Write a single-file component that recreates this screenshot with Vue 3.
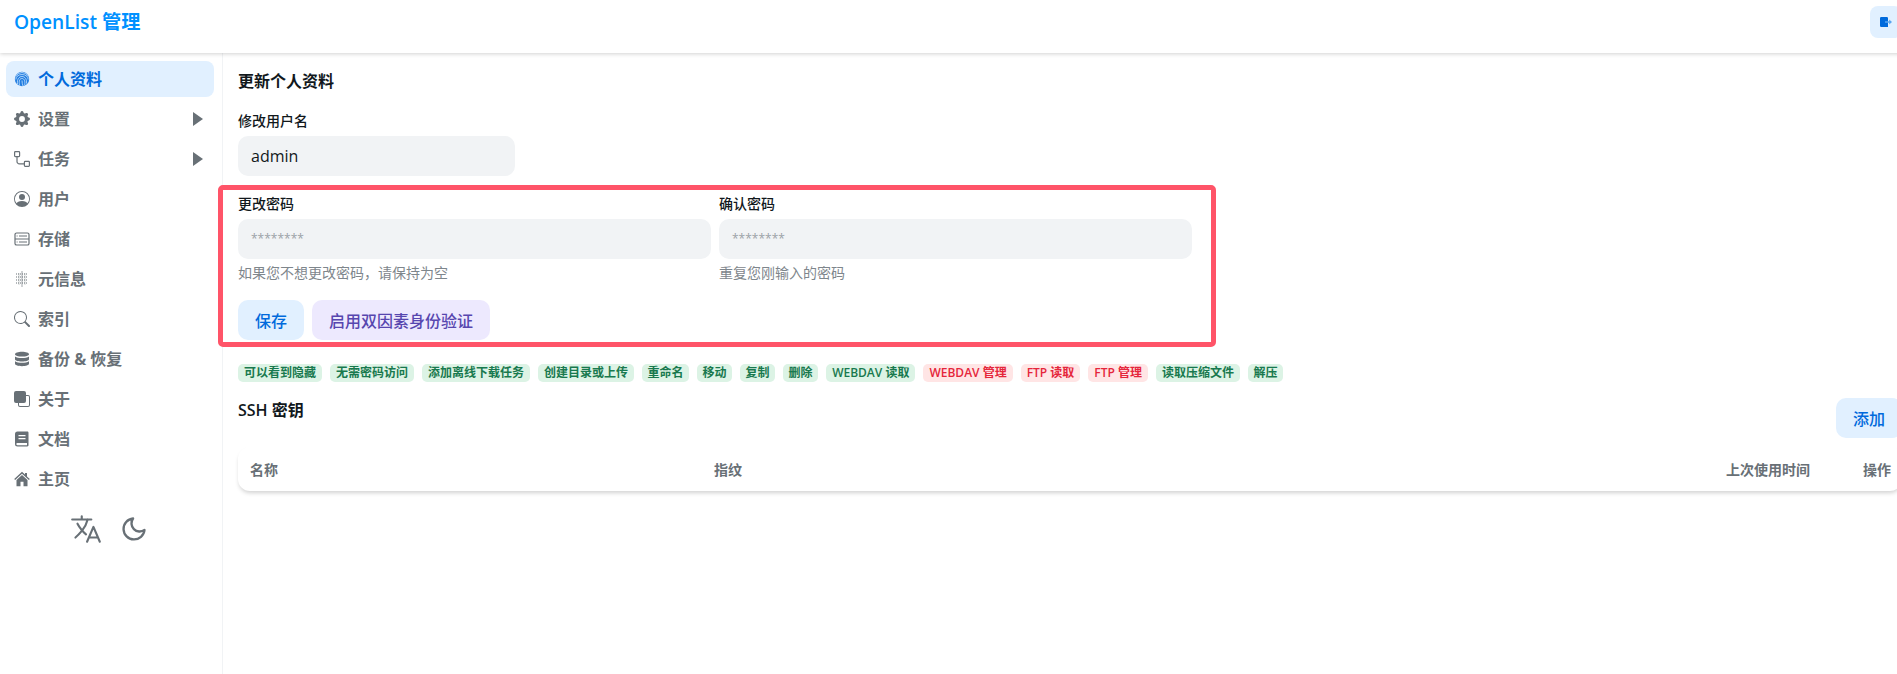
<script setup>
const navItems = [
  { label: '个人资料', icon: 'finger', active: true },
  { label: '设置', icon: 'gear', arrow: true },
  { label: '任务', icon: 'route', arrow: true },
  { label: '用户', icon: 'user' },
  { label: '存储', icon: 'storage' },
  { label: '元信息', icon: 'meta' },
  { label: '索引', icon: 'search' },
  { label: '备份 & 恢复', icon: 'db' },
  { label: '关于', icon: 'front' },
  { label: '文档', icon: 'book' },
  { label: '主页', icon: 'home' },
]
const perms = [
  { text: '可以看到隐藏' }, { text: '无需密码访问' }, { text: '添加离线下载任务' }, { text: '创建目录或上传' },
  { text: '重命名', tight: true }, { text: '移动', tight: true }, { text: '复制', tight: true }, { text: '删除', tight: true },
  { text: 'WEBDAV 读取' },
  { text: 'WEBDAV 管理', danger: true }, { text: 'FTP 读取', danger: true }, { text: 'FTP 管理', danger: true },
  { text: '读取压缩文件' }, { text: '解压', tight: true },
]
</script>

<template>
  <div class="page">
    <header class="topbar">
      <div class="brand">OpenList 管理</div>
      <button class="logout" aria-label="退出">
        <svg viewBox="0 0 12 10" width="12" height="10">
          <path fill="#006adc" d="M1.2 0h5.6A1.2 1.2 0 0 1 8 1.2V10H1.2A1.2 1.2 0 0 1 0 8.8V1.2A1.2 1.2 0 0 1 1.2 0z" />
          <path fill="#5aa5ef" d="M5 4.200h4.200V2.600L12 5 9.200 7.400V5.800H5z" />
        </svg>
      </button>
    </header>

    <div class="body">
      <aside class="sidebar">
        <nav class="nav">
          <a v-for="item in navItems" :key="item.label" class="nav-item" :class="{ active: item.active }">
            <span class="nav-icon">
              <svg v-if="item.icon === 'finger'" viewBox="0 0 16 16" class="ic" fill="none">
                <circle cx="8" cy="8" r="7.200" fill="currentColor" opacity=".85" />
                <g fill="none" stroke="#e1f0ff" stroke-width=".7">
                  <path d="M2.200 5.200A6.400 6.400 0 0 1 13.800 5.200" />
                  <path d="M1.800 8.500A6.200 5 0 0 1 14.200 8.500" />
                  <path d="M3.500 13c-.6-5 1.600-7.500 4.500-7.500s5 2.500 4.500 7" />
                  <path d="M5.500 14.500c-.8-5 .2-7 2.500-7s3.300 2.500 2.700 6.500" />
                  <path d="M8 9.500c0 2 .4 3.800 1 5.500" />
                </g>
              </svg>
              <svg v-else-if="item.icon === 'gear'" viewBox="0 0 16 16" class="ic" fill="currentColor">
                <path d="M9.405 1.05c-.413-1.4-2.397-1.4-2.81 0l-.1.34a1.464 1.464 0 0 1-2.105.872l-.31-.17c-1.283-.698-2.686.705-1.987 1.987l.169.311c.446.82.023 1.841-.872 2.105l-.34.1c-1.4.413-1.4 2.397 0 2.81l.34.1a1.464 1.464 0 0 1 .872 2.105l-.17.31c-.698 1.283.705 2.686 1.987 1.987l.311-.169a1.464 1.464 0 0 1 2.105.872l.1.34c.413 1.4 2.397 1.4 2.81 0l.1-.34a1.464 1.464 0 0 1 2.105-.872l.31.17c1.283.698 2.686-.705 1.987-1.987l-.169-.311a1.464 1.464 0 0 1 .872-2.105l.34-.1c1.4-.413 1.4-2.397 0-2.81l-.34-.1a1.464 1.464 0 0 1-.872-2.105l.17-.31c.698-1.283-.705-2.686-1.987-1.987l-.311.169a1.464 1.464 0 0 1-2.105-.872l-.1-.34zM8 10.93a2.929 2.929 0 1 1 0-5.86 2.929 2.929 0 0 1 0 5.858z" />
              </svg>
              <svg v-else-if="item.icon === 'route'" viewBox="0 0 16 16" class="ic" fill="none" stroke="currentColor" stroke-width="1.200">
                <rect x=".6" y=".6" width="5" height="5" rx=".8" />
                <rect x="10.400" y="10.400" width="5" height="5" rx=".8" />
                <path d="M3 5.600V10.500a2.400 2.400 0 0 0 2.400 2.400h5" />
              </svg>
              <svg v-else-if="item.icon === 'user'" viewBox="0 0 16 16" class="ic" fill="currentColor">
                <path d="M11 6a3 3 0 1 1-6 0 3 3 0 0 1 6 0z" />
                <path fill-rule="evenodd" d="M0 8a8 8 0 1 1 16 0A8 8 0 0 1 0 8zm8-7a7 7 0 0 0-5.468 11.37C3.242 11.226 4.805 10 8 10s4.757 1.225 5.468 2.37A7 7 0 0 0 8 1z" />
              </svg>
              <svg v-else-if="item.icon === 'storage'" viewBox="0 0 16 16" class="ic" fill="none" stroke="currentColor" stroke-width="1.200">
                <rect x="1" y="2" width="14" height="12" rx="1.600" />
                <path d="M1 8h14M5 5h8M5 11h8M2.600 5h1M2.600 11h1" />
              </svg>
              <svg v-else-if="item.icon === 'meta'" viewBox="0 0 16 16" class="ic" fill="none" stroke="currentColor">
                <path d="M2 3h12M2 6h12M2 9h12M2 12h12" stroke-width="1.100" stroke-dasharray="1 1" />
                <path d="M8 0v16" stroke-width="1.400" opacity=".45" />
                <path d="M5 2v12M11 2v12" stroke-width=".8" opacity=".4" />
              </svg>
              <svg v-else-if="item.icon === 'search'" viewBox="0 0 16 16" class="ic" fill="currentColor">
                <path d="M11.742 10.344a6.5 6.5 0 1 0-1.397 1.398h-.001c.03.04.062.078.098.115l3.85 3.85a1 1 0 0 0 1.415-1.414l-3.85-3.85a1.007 1.007 0 0 0-.115-.1zM12 6.5a5.5 5.5 0 1 1-11 0 5.5 5.5 0 0 1 11 0z" />
              </svg>
              <svg v-else-if="item.icon === 'db'" viewBox="0 0 16 16" class="ic" fill="currentColor">
                <path d="M15 3.200c0 1.300-3.100 2.400-7 2.400S1 4.500 1 3.200 4.100.8 8 .8s7 1.100 7 2.400z" />
                <path d="M15 5.400v2.800c0 1.300-3.100 2.300-7 2.300s-7-1-7-2.300V5.400c1.500 1.100 4.200 1.500 7 1.500s5.500-.4 7-1.500z" />
                <path d="M15 10.200v2.600c0 1.300-3.100 2.400-7 2.400s-7-1.100-7-2.400v-2.600c1.500 1.100 4.200 1.500 7 1.500s5.500-.4 7-1.500z" />
              </svg>
              <svg v-else-if="item.icon === 'front'" viewBox="0 0 16 16" class="ic" fill="currentColor">
                <path d="M0 2a2 2 0 0 1 2-2h8a2 2 0 0 1 2 2v2h2a2 2 0 0 1 2 2v8a2 2 0 0 1-2 2H6a2 2 0 0 1-2-2v-2H2a2 2 0 0 1-2-2V2zm5 10v2a1 1 0 0 0 1 1h8a1 1 0 0 0 1-1V6a1 1 0 0 0-1-1h-2v5a2 2 0 0 1-2 2H5z" />
              </svg>
              <svg v-else-if="item.icon === 'book'" viewBox="0 0 16 16" class="ic" fill="currentColor">
                <path fill-rule="evenodd" d="M3.500.5h9.800c.7 0 1.200.5 1.200 1.200V14.300c0 .7-.5 1.200-1.200 1.200H3.500A2.500 2.500 0 0 1 1 13V3A2.500 2.500 0 0 1 3.500.5zM4.500 4v1.200h7V4h-7zm0 3v1.200h7V7h-7zM3.400 12a1.100 1.100 0 0 0 0 2.200h9.600V12H3.400z" />
              </svg>
              <svg v-else viewBox="0 0 16 16" class="ic" fill="currentColor">
                <path d="M8 .8 .2 8l.9 1L8 2.700 14.900 9l.9-1-2.800-2.600V2h-2v1.600L8 .8z" />
                <path d="M8 4 2.500 9v6.200h4v-4.400h3v4.400h4V9L8 4z" />
              </svg>
            </span>
            <span class="nav-label">{{ item.label }}</span>
            <svg v-if="item.arrow" class="caret" viewBox="0 0 10 14" width="10" height="14">
              <path fill="currentColor" d="M0 0l10 7-10 7z" />
            </svg>
          </a>
        </nav>
        <div class="side-tools">
          <svg viewBox="0 0 512 512" width="34" height="34" fill="none" stroke="currentColor" stroke-width="32" stroke-linecap="round" stroke-linejoin="round">
            <path d="M48 112h288M192 64v48M272 448l96-224 96 224M301.500 384h133M281.300 112S257 206 199 277 97 384 97 384" />
            <path d="M256 336s-35-27-72-75-56-85-56-85" />
          </svg>
          <svg viewBox="0 0 24 24" width="28" height="28" fill="none" stroke="currentColor" stroke-width="2" stroke-linecap="round" stroke-linejoin="round">
            <path d="M21 12.790A9 9 0 1 1 11.210 3 7 7 0 0 0 21 12.790z" />
          </svg>
        </div>
      </aside>

      <main class="main">
        <h2 class="title">更新个人资料</h2>
        <div class="field username">
          <label class="label">修改用户名</label>
          <div class="input">admin</div>
        </div>

        <section class="pw-section">
          <div class="pw-grid">
            <div class="field">
              <label class="label">更改密码</label>
              <div class="input placeholder">********</div>
              <p class="help">如果您不想更改密码，请保持为空</p>
            </div>
            <div class="field">
              <label class="label">确认密码</label>
              <div class="input placeholder">********</div>
              <p class="help">重复您刚输入的密码</p>
            </div>
          </div>
          <div class="actions">
            <button class="btn blue">保存</button>
            <button class="btn violet">启用双因素身份验证</button>
          </div>
          <div class="highlight"></div>
        </section>

        <div class="tags">
          <span v-for="p in perms" :key="p.text" class="tag" :class="{ danger: p.danger, tight: p.tight }">{{ p.text }}</span>
        </div>

        <div class="ssh-head">
          <h2 class="title">SSH 密钥</h2>
          <button class="btn blue">添加</button>
        </div>

        <div class="table">
          <span>名称</span>
          <span>指纹</span>
          <span>上次使用时间</span>
          <span>操作</span>
        </div>
      </main>
    </div>
  </div>
</template>

<style scoped>
.page {
  width: 1902px;
  height: 674px;
  display: flex;
  flex-direction: column;
  background: #fff;
  color: #11181c;
  font-family: "Open Sans", "Noto Sans CJK SC", sans-serif;
  font-size: 16px;
}
.topbar {
  position: relative;
  z-index: 2;
  height: 53px;
  flex: none;
  display: flex;
  align-items: center;
  justify-content: space-between;
  padding: 0 0 10px 14px;
  box-sizing: border-box;
  background: #fff;
  box-shadow: 0 1px 4px rgba(0, 0, 0, 0.18);
}
.brand {
  font-size: 19.2px;
  line-height: 24px;
  font-weight: 600;
  color: #0091ff;
  margin-top: 1px;
}
.logout {
  width: 32px;
  height: 32px;
  border: 0;
  border-radius: 8px;
  background: #e1f0ff;
  display: flex;
  align-items: center;
  justify-content: flex-start;
  padding: 0 0 0 10px;
}
.body {
  flex: 1;
  display: flex;
  min-height: 0;
}
.sidebar {
  width: 223px;
  flex: none;
  box-sizing: border-box;
  border-right: 1px solid #f1f3f5;
  padding: 8px 8px 0 6px;
  color: #687076;
}
.nav {
  display: flex;
  flex-direction: column;
  gap: 4px;
}
.nav-item {
  height: 36px;
  display: flex;
  align-items: center;
  border-radius: 8px;
  padding: 0 10px 0 8px;
  font-size: 16px;
  line-height: 24px;
  font-weight: 700;
}
.nav-item.active {
  background: #e1f0ff;
  color: #006adc;
}
.nav-icon {
  width: 16px;
  height: 16px;
  display: flex;
  margin-right: 8px;
  flex: none;
}
.ic {
  width: 16px;
  height: 16px;
}
.nav-label {
  flex: 1;
}
.caret {
  flex: none;
  margin-right: 1px;
}
.side-tools {
  margin-top: 15px;
  padding-right: 3px;
  display: flex;
  justify-content: center;
  align-items: center;
  gap: 17px;
}
.main {
  flex: 1;
  min-width: 0;
  padding: 16px 0 0 15px;
}
.title {
  margin: 0;
  font-size: 16px;
  line-height: 24px;
  font-weight: 600;
}
.field {
  display: flex;
  flex-direction: column;
}
.username {
  width: 277px;
  margin-top: 19px;
}
.label {
  font-size: 14px;
  line-height: 18px;
  font-weight: 500;
  margin-bottom: 6px;
}
.input {
  height: 40px;
  box-sizing: border-box;
  background: #f1f3f5;
  border-radius: 10px;
  padding: 0 13px;
  font-size: 16px;
  line-height: 40px;
  color: #11181c;
}
.input.placeholder {
  color: #9ba1a6;
  font-size: 12px;
}
.help {
  margin: 4px 0 0;
  font-size: 14px;
  line-height: 20px;
  color: #7e868c;
}
.pw-section {
  position: relative;
  width: 954px;
  margin-top: 19px;
}
.pw-grid {
  display: grid;
  grid-template-columns: 1fr 1fr;
  gap: 8px;
}
.actions {
  display: flex;
  gap: 8px;
  margin-top: 17px;
}
.btn {
  height: 40px;
  border: 0;
  border-radius: 10px;
  padding: 0 17px;
  font-family: inherit;
  font-size: 16px;
  font-weight: 500;
  white-space: nowrap;
}
.btn.blue {
  background: #e1f0ff;
  color: #006adc;
}
.btn.violet {
  background: #ede9fe;
  color: #5746af;
}
.highlight {
  position: absolute;
  inset: -10px -24px -7px -20px;
  border: 5px solid #ff5468;
  border-radius: 5px;
  pointer-events: none;
}
.tags {
  display: flex;
  flex-wrap: wrap;
  gap: 8px;
  margin-top: 24px;
}
.tag {
  height: 18px;
  line-height: 18px;
  padding: 0 6px;
  border-radius: 5px;
  font-size: 12px;
  font-weight: 600;
  background: #dcf3e5;
  color: #18794e;
}
.tag.tight {
  padding: 0 5.5px;
}
.tag.danger {
  background: #ffe5e5;
  color: #e5263b;
}
.ssh-head {
  display: flex;
  justify-content: space-between;
  align-items: flex-start;
  margin-top: 16px;
}
.table {
  margin-top: 9px;
  height: 44px;
  box-sizing: border-box;
  padding-left: 12px;
  display: grid;
  grid-template-columns: 464px 1012px 137px 1fr;
  align-items: center;
  border-radius: 12px;
  box-shadow: 0 3px 4px -1px rgba(0, 0, 0, 0.18);
  font-size: 14px;
  font-weight: 700;
  color: #687076;
}
</style>

<style>
html, body {
  margin: 0;
  overflow: hidden;
}
</style>
